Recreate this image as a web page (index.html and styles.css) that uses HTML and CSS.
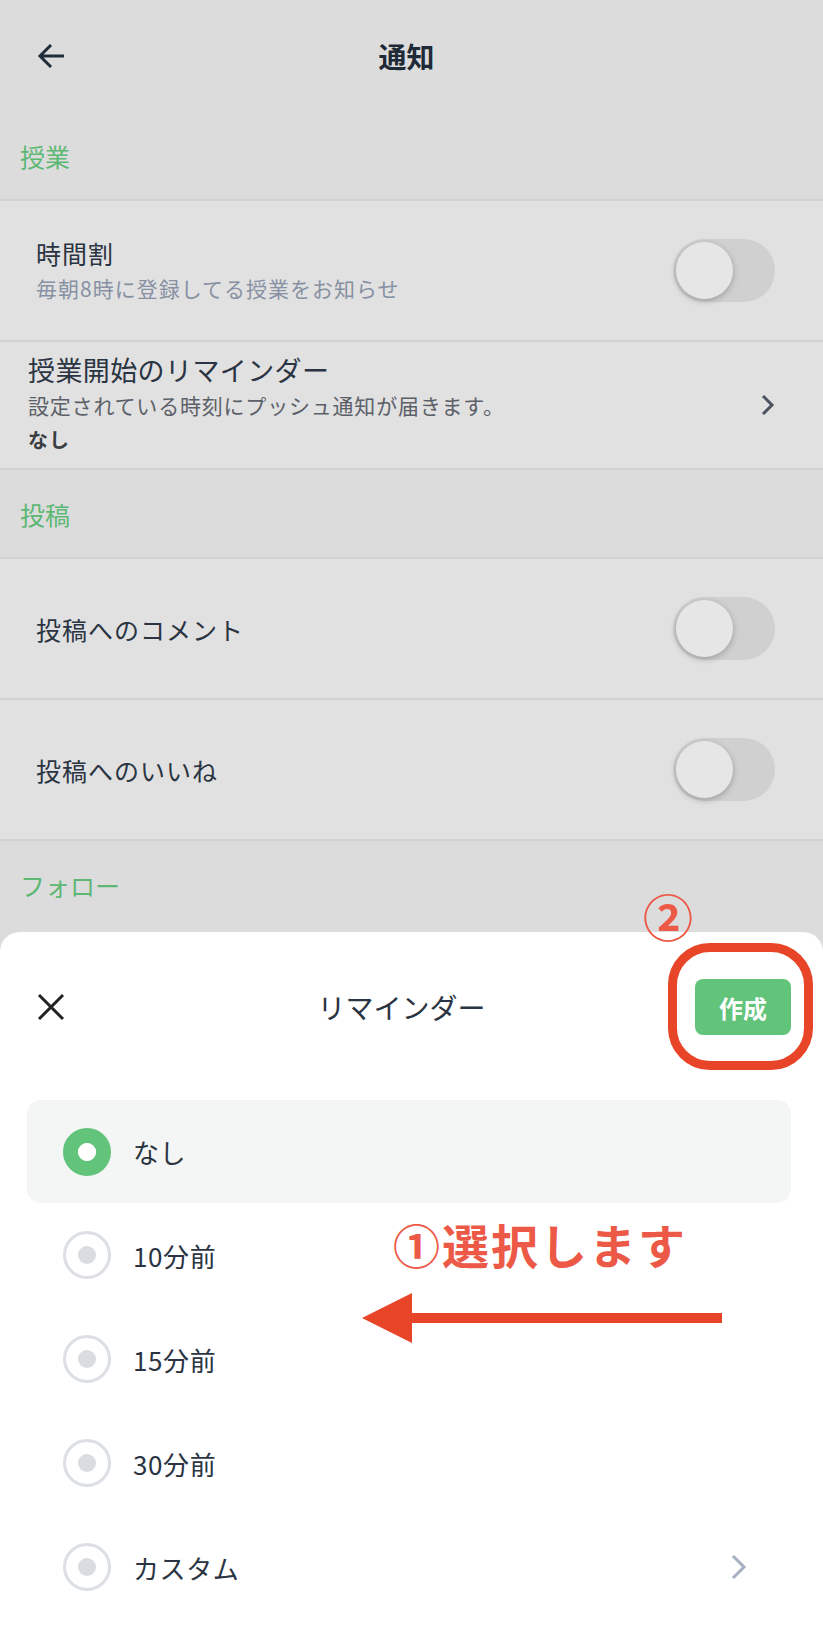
FILE: index.html
```html
<!DOCTYPE html>
<html lang="ja">
<head>
    <meta charset="UTF-8">
    <meta name="viewport" content="width=device-width, initial-scale=1.0">
    <title>通知</title>
    <link rel="stylesheet" href="styles.css">
</head>
<body>
    <div class="screen">
        <div class="topbar">
            <svg class="back" width="28" height="28" viewBox="0 0 28 28">
                <path d="M27 14H3M14 3L3 14l11 11" fill="none" stroke="#1f2d3a" stroke-width="3"/>
            </svg>
            <h1>通知</h1>
        </div>

        <div class="section">授業</div>
        <div class="row tall">
            <div class="text">
                <div class="title">時間割</div>
                <div class="sub">毎朝8時に登録してる授業をお知らせ</div>
            </div>
            <span class="toggle"><span class="knob"></span></span>
        </div>
        <div class="row reminder">
            <div class="text">
                <div class="title big">授業開始のリマインダー</div>
                <div class="sub dark">設定されている時刻にプッシュ通知が届きます。</div>
                <div class="value">なし</div>
            </div>
            <svg class="chev" width="18" height="24" viewBox="0 0 18 24">
                <path d="M4 3l9 9-9 9" fill="none" stroke="#4a5260" stroke-width="3"/>
            </svg>
        </div>

        <div class="section">投稿</div>
        <div class="row tall">
            <div class="title">投稿へのコメント</div>
            <span class="toggle"><span class="knob"></span></span>
        </div>
        <div class="row tall">
            <div class="title">投稿へのいいね</div>
            <span class="toggle"><span class="knob"></span></span>
        </div>

        <div class="section">フォロー</div>

        <!-- bottom sheet -->
        <div class="sheet">
            <div class="sheet-head">
                <svg class="close" width="30" height="30" viewBox="0 0 30 30">
                    <path d="M3 3l24 24M27 3L3 27" stroke="#222" stroke-width="3"/>
                </svg>
                <div class="sheet-title">リマインダー</div>
                <button class="create">作成</button>
            </div>

            <ul class="options">
                <li class="selected"><span class="radio"></span>なし</li>
                <li><span class="radio"></span>10分前</li>
                <li><span class="radio"></span>15分前</li>
                <li><span class="radio"></span>30分前</li>
                <li>
                    <span class="radio"></span>カスタム
                    <svg class="chev-light" width="18" height="28" viewBox="0 0 18 28">
                        <path d="M3 3l11 11L3 25" fill="none" stroke="#a6b0c0" stroke-width="3"/>
                    </svg>
                </li>
            </ul>

            <!-- annotations -->
            <div class="mark-two">②</div>
            <div class="ring"></div>
            <div class="note">①選択します</div>
            <svg class="arrow" width="362" height="54" viewBox="0 0 362 54">
                <path d="M48 27H360" stroke="#e84427" stroke-width="10"/>
                <path d="M0 27L50 2V52Z" fill="#e84427"/>
            </svg>
        </div>
    </div>
</body>
</html>
```

FILE: styles.css
```css
body {
    margin: 0;
    font-family: "Noto Sans CJK JP", "Noto Sans", sans-serif;
    color: #2a3442;
}

.screen {
    position: relative;
    width: 823px;
    height: 1632px;
    overflow: hidden;
    background: #dcdcdc;
}

.topbar {
    height: 112px;
    display: flex;
    align-items: center;
    justify-content: center;
    position: relative;
}

.back {
    position: absolute;
    left: 37px;
    top: 42px;
}

h1 {
    margin: 0;
    font-size: 28px;
    font-weight: bold;
    color: #1f2a37;
    line-height: 1;
    padding-right: 10px;
}

.section {
    height: 87px;
    display: flex;
    align-items: center;
    padding-left: 20px;
    font-size: 25px;
    color: #5cb874;
    border-top: 2px solid #d2d2d2;
}

.topbar + .section {
    border-top: none;
}

.row {
    display: flex;
    align-items: center;
    justify-content: space-between;
    padding: 0 48px 0 36px;
    background: #e1e1e1;
    border-top: 2px solid #d2d2d2;
}

.row.tall {
    height: 139px;
}

.row.reminder {
    height: 126px;
    padding-left: 28px;
}

.title {
    font-size: 25px;
    line-height: 34px;
    letter-spacing: 1px;
}

.title.big {
    font-size: 27px;
    letter-spacing: 0.4px;
}

.sub {
    font-size: 21px;
    line-height: 36px;
    color: #8791a3;
    letter-spacing: 1px;
}

.sub.dark {
    color: #5b6068;
    letter-spacing: 0.8px;
}

.value {
    font-size: 20px;
    line-height: 34px;
    font-weight: bold;
    color: #3a3d42;
    letter-spacing: 1px;
}

.chev {
    margin-right: -2px;
}

.toggle {
    width: 102px;
    height: 63px;
    border-radius: 32px;
    background: #d0d0d0;
    display: flex;
    align-items: center;
    padding-left: 3px;
    box-sizing: border-box;
}

.knob {
    width: 57px;
    height: 57px;
    border-radius: 50%;
    background: #e6e6e6;
    box-shadow: 0 2px 6px rgba(0, 0, 0, 0.25);
}

.sheet {
    position: absolute;
    left: 0;
    right: 0;
    top: 932px;
    bottom: 0;
    background: #fff;
    border-radius: 20px 20px 0 0;
}

.sheet-head {
    height: 150px;
    display: grid;
    grid-template-columns: 1fr auto 1fr;
    align-items: center;
    padding: 0 32px 0 36px;
}

.sheet-title {
    font-size: 28px;
    padding-right: 24px;
}

.create {
    justify-self: end;
    width: 96px;
    height: 56px;
    border: none;
    border-radius: 8px;
    background: #62c37b;
    color: #fff;
    font-family: inherit;
    font-size: 24px;
    font-weight: bold;
}

.options {
    list-style: none;
    margin: 18px 32px 0 27px;
    padding: 0;
}

.options li {
    height: 104px;
    display: flex;
    align-items: center;
    gap: 22px;
    padding: 0 43px 0 36px;
    font-size: 26px;
    letter-spacing: 0.6px;
    color: #2a3442;
    border-radius: 14px;
}

.options li.selected {
    height: 103px;
    background: #f4f6f5;
}

.radio {
    width: 48px;
    height: 48px;
    border-radius: 50%;
    box-sizing: border-box;
    border: 3px solid #dcdfe3;
    display: flex;
    align-items: center;
    justify-content: center;
    flex-shrink: 0;
}

.radio::after {
    content: "";
    width: 18px;
    height: 18px;
    border-radius: 50%;
    background: #d9dce0;
}

.selected .radio {
    border: 15px solid #62c37b;
}

.selected .radio::after {
    background: #fff;
}

.chev-light {
    margin-left: auto;
}

.mark-two {
    position: absolute;
    left: 643px;
    top: -42px;
    font-size: 50px;
    font-weight: bold;
    line-height: 1;
    color: #ec5a47;
}

.ring {
    position: absolute;
    left: 668px;
    top: 11px;
    width: 145px;
    height: 127px;
    box-sizing: border-box;
    border: 9px solid #e84427;
    border-radius: 42px;
}

.note {
    position: absolute;
    left: 393px;
    top: 288px;
    font-size: 47px;
    font-weight: bold;
    letter-spacing: 2px;
    line-height: 1;
    color: #ec5a47;
}

.arrow {
    position: absolute;
    left: 362px;
    top: 359px;
}
```
